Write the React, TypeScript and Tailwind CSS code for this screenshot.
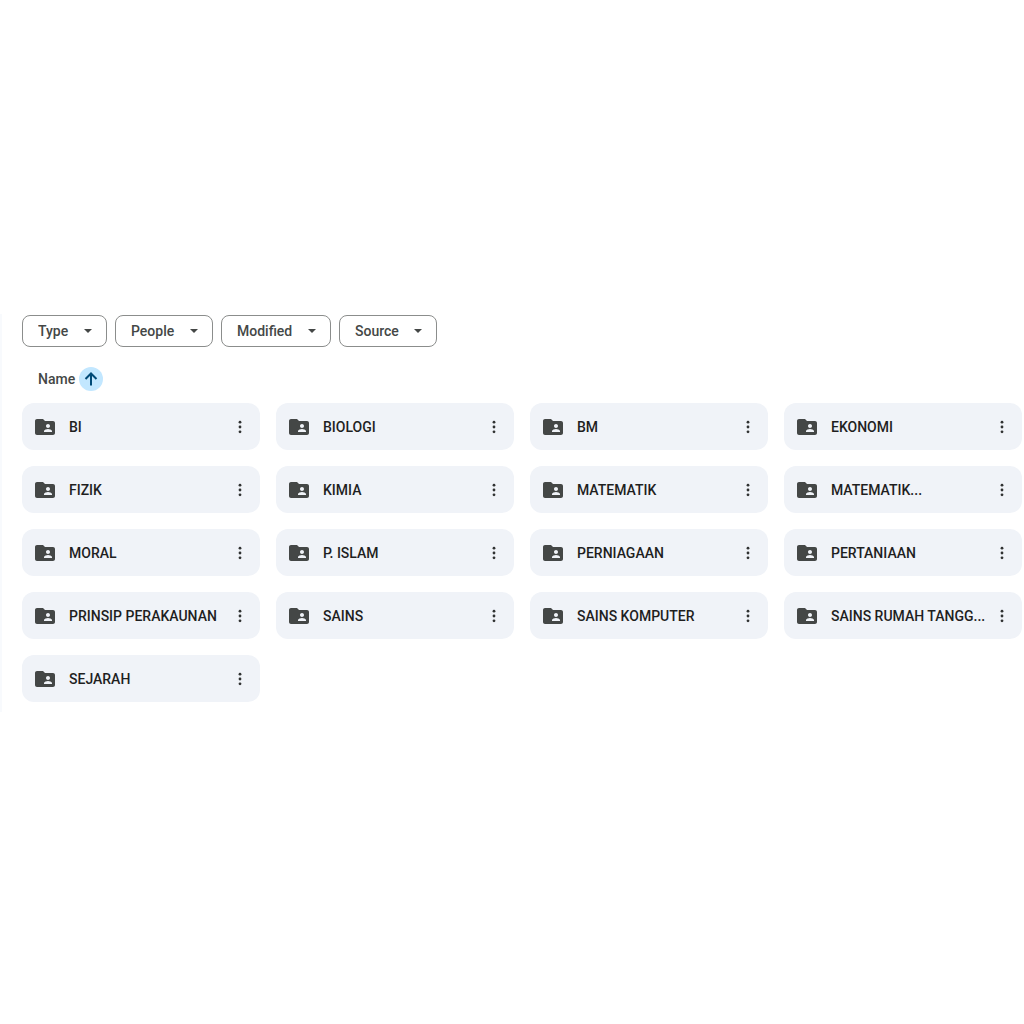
const filters = ["Type", "People", "Modified", "Source"]

const folders = [
  "BI",
  "BIOLOGI",
  "BM",
  "EKONOMI",
  "FIZIK",
  "KIMIA",
  "MATEMATIK",
  "MATEMATIK...",
  "MORAL",
  "P. ISLAM",
  "PERNIAGAAN",
  "PERTANIAAN",
  "PRINSIP PERAKAUNAN",
  "SAINS",
  "SAINS KOMPUTER",
  "SAINS RUMAH TANGG...",
  "SEJARAH",
]

function FilterChip({ label }: { label: string }) {
  return (
    <div className="relative">
      <select
        aria-label={label}
        className="block h-8 appearance-none rounded-lg border border-[#8b8d8c] bg-white pl-[15px] pr-[37px] text-sm font-medium text-[#444746]"
      >
        <option>{label}</option>
      </select>
      <svg viewBox="0 0 8 4" className="pointer-events-none absolute right-[15px] top-[14px] h-1 w-2 fill-[#444746]">
        <path d="M0 0h8L4 4z" />
      </svg>
    </div>
  )
}

function SharedFolderIcon() {
  return (
    <svg viewBox="0 0 24 24" className="size-6 shrink-0 fill-[#444746]">
      <path d="M20 6h-8l-2-2H4c-1.1 0-1.99.9-1.99 2L2 18c0 1.1.9 2 2 2h16c1.1 0 2-.9 2-2V8c0-1.1-.9-2-2-2zm-5 3c1.1 0 2 .9 2 2s-.9 2-2 2-2-.9-2-2 .9-2 2-2zm4 8h-8v-1c0-1.33 2.67-2 4-2s4 .67 4 2v1z" />
    </svg>
  )
}

function FolderCard({ name }: { name: string }) {
  return (
    <div className="flex h-[47px] min-w-0 items-center rounded-xl bg-[#f0f3f8] pl-[11px] pr-2">
      <SharedFolderIcon />
      <span className="ml-3 min-w-0 flex-1 whitespace-nowrap text-sm font-medium text-[#1f1f1f]">{name}</span>
      <button type="button" aria-label={`More actions for ${name}`} className="flex size-6 shrink-0 items-center justify-center">
        <svg viewBox="0 0 4 14" className="h-[14px] w-1 fill-[#303232]">
          <circle cx="2" cy="2.2" r="1.4" />
          <circle cx="2" cy="7" r="1.4" />
          <circle cx="2" cy="11.8" r="1.4" />
        </svg>
      </button>
    </div>
  )
}

export default function App() {
  return (
    <div className="min-h-screen bg-white pt-[314px] font-['Roboto',sans-serif]">
      <main className="border-l-2 border-[#f8fafd] pb-2.5 pl-5 pr-0.5 pt-px">
        <div className="flex gap-2">
          {filters.map((label) => (
            <FilterChip key={label} label={label} />
          ))}
        </div>
        <div className="mt-5 flex h-6 items-center gap-1 pl-4">
          <span className="text-sm font-medium text-[#444746]">Name</span>
          <button
            type="button"
            aria-label="Reverse sort direction"
            className="flex size-6 items-center justify-center rounded-full bg-[#c2e7ff]"
          >
            <svg viewBox="0 0 14 14" className="size-[14px] fill-none stroke-[#004a77] stroke-2">
              <path d="M7 13.5V1.5M1.5 7 7 1.5 12.500 7" />
            </svg>
          </button>
        </div>
        <div className="mt-3 grid grid-cols-4 gap-4">
          {folders.map((name) => (
            <FolderCard key={name} name={name} />
          ))}
        </div>
      </main>
    </div>
  )
}
